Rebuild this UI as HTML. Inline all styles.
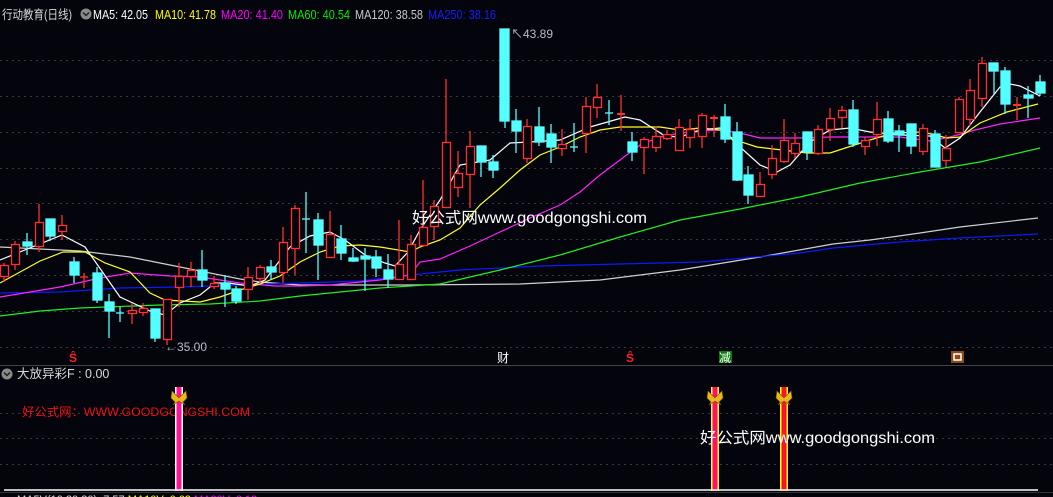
<!DOCTYPE html>
<html><head><meta charset="utf-8"><style>
html,body{margin:0;padding:0;background:#04040d;width:1053px;height:497px;overflow:hidden}
svg{display:block}
text{font-family:"Liberation Sans","Noto Sans CJK SC",sans-serif}
</style></head><body>
<svg width="1053" height="497" viewBox="0 0 1053 497" xmlns="http://www.w3.org/2000/svg">
<rect width="1053" height="497" fill="#04040d"/>
<g stroke="#3a3a3a" stroke-dasharray="2,4" stroke-width="1">
<line x1="0" y1="60.5" x2="1053" y2="60.5"/><line x1="0" y1="96.5" x2="1053" y2="96.5"/>
<line x1="0" y1="132.5" x2="1053" y2="132.5"/><line x1="0" y1="168.5" x2="1053" y2="168.5"/>
<line x1="0" y1="203.5" x2="1053" y2="203.5"/><line x1="0" y1="239.5" x2="1053" y2="239.5"/>
<line x1="0" y1="275.5" x2="1053" y2="275.5"/><line x1="0" y1="311.5" x2="1053" y2="311.5"/>
<line x1="0" y1="347.5" x2="1053" y2="347.5"/>
<line x1="0" y1="413.5" x2="1053" y2="413.5"/><line x1="0" y1="438.5" x2="1053" y2="438.5"/><line x1="0" y1="464.5" x2="1053" y2="464.5"/>
</g>
<line x1="0" y1="365.5" x2="1053" y2="365.5" stroke="#444" stroke-width="1"/>
<line x1="0" y1="492.5" x2="1053" y2="492.5" stroke="#333" stroke-width="1"/>

<g fill="none" stroke-width="1.2">
<polyline stroke="#d0d0d0" points="0,247 40,249 80,251 130,257 200,271 240,279 260,282 300,285 410,285 520,284 600,280 680,270 760,257 833,244 870,240 920,233 960,227 1038,218"/>
<polyline stroke="#0a1aff" points="0,293 60,292 120,288 180,287 240,285 300,283 360,281 410,275 460,270 540,266 620,264 700,262 800,253 833,248 900,242 960,238 1038,234"/>
<polyline stroke="#22ee22" points="0,316 40,311 80,308 160,305 210,304 260,301 300,296 340,292 380,288 410,286 440,284 500,270 560,255 620,237 680,220 740,209 800,197 860,183 920,172 980,162 1040,148"/>
<polyline stroke="#ff22ff" points="0,297 60,287 100,278 130,273 170,276 200,277 240,283 275,286 300,286 330,285 380,280 410,275 420,262 440,259 470,246 500,232 530,218 560,205 580,192 600,175 620,160 640,145 660,137 680,133 700,131 720,130 740,133 760,138 800,138 830,137 900,137 930,141 950,137 975,130 1000,124 1020,121 1040,118"/>
<polyline stroke="#ffff22" points="0,283 40,261 63,252 85,252 105,263 130,272 150,293 165,300 200,302 220,297 240,290 260,284 280,276 300,262 320,252 340,246 360,245 380,247 410,252 420,247 440,240 460,228 480,205 500,188 520,170 540,155 560,147 580,137 600,130 620,127 660,127 680,130 700,128 720,130 735,140 757,147 807,153 830,153 870,140 893,133 923,132 947,138 960,137 980,123 1007,112 1038,104"/>
<polyline stroke="#ffffff" points="0,260 62,235 85,247 120,297 150,311 165,315 180,303 200,295 215,283 228,283 250,286 265,280 290,247 310,236 330,232 345,240 365,255 385,263 395,266 408,252 420,230 440,200 460,165 490,160 510,143 530,142 560,140 590,127 625,117 640,120 665,136 680,137 700,130 720,128 740,147 760,165 777,172 790,165 810,142 830,130 850,128 870,132 900,135 930,136 945,148 960,138 980,112 1000,87 1010,84 1020,86 1040,96"/>
</g>

<g stroke="#ff3030" stroke-width="1.3" fill="#04040d">
<line x1="4" y1="263" x2="4" y2="282"/><rect x="0.5" y="265.5" width="8" height="11"/>
<line x1="15" y1="241" x2="15" y2="270"/><rect x="11.5" y="244.5" width="8" height="20"/>
<line x1="39" y1="204" x2="39" y2="252"/><rect x="35.5" y="222.5" width="8" height="24"/>
<line x1="62" y1="215" x2="62" y2="240"/><rect x="58.5" y="225.5" width="8" height="6"/>
<line x1="84" y1="273" x2="84" y2="288"/><line x1="80" y1="277" x2="88" y2="277"/>
<line x1="132" y1="303" x2="132" y2="324"/><rect x="128.5" y="310.5" width="8" height="3"/>
<line x1="143" y1="303" x2="143" y2="316"/><rect x="139.5" y="308.5" width="8" height="4"/>
<line x1="167" y1="299" x2="167" y2="345"/><rect x="163.5" y="299.5" width="8" height="40"/>
<line x1="179" y1="263" x2="179" y2="307"/><rect x="175.5" y="276.5" width="8" height="11"/>
<line x1="191" y1="262" x2="191" y2="287"/><rect x="187.5" y="270.5" width="8" height="6"/>
<line x1="214" y1="276" x2="214" y2="289"/><rect x="210.5" y="283.5" width="8" height="3"/>
<line x1="248" y1="267" x2="248" y2="300"/><rect x="244.5" y="277.5" width="8" height="12"/>
<line x1="260" y1="265" x2="260" y2="283"/><rect x="256.5" y="267.5" width="8" height="11"/>
<line x1="283" y1="227" x2="283" y2="283"/><rect x="279.5" y="242.5" width="8" height="30"/>
<line x1="295" y1="205" x2="295" y2="275"/><rect x="291.5" y="208.5" width="8" height="40"/>
<line x1="330" y1="211" x2="330" y2="257"/><rect x="326.5" y="234.5" width="8" height="23"/>
<line x1="399" y1="220" x2="399" y2="280"/><rect x="395.5" y="264.5" width="8" height="15"/>
<line x1="411" y1="235" x2="411" y2="280"/><rect x="407.5" y="244.5" width="8" height="35"/>
<line x1="423" y1="180" x2="423" y2="247"/><rect x="419.5" y="227.5" width="8" height="18"/>
<line x1="434" y1="200" x2="434" y2="240"/><rect x="430.5" y="206.5" width="8" height="20"/>
<line x1="446" y1="79" x2="446" y2="207"/><rect x="442.5" y="142.5" width="8" height="65"/>
<line x1="458" y1="151" x2="458" y2="197"/><rect x="454.5" y="173.5" width="8" height="14"/>
<line x1="470" y1="131" x2="470" y2="208"/><rect x="466.5" y="146.5" width="8" height="28"/>
<line x1="527" y1="119" x2="527" y2="163"/><rect x="523.5" y="126.5" width="8" height="32"/>
<line x1="562" y1="129" x2="562" y2="156"/><rect x="558.5" y="144.5" width="8" height="4"/>
<line x1="586" y1="97" x2="586" y2="153"/><rect x="582.5" y="106.5" width="8" height="27"/>
<line x1="597" y1="84" x2="597" y2="118"/><rect x="593.5" y="97.5" width="8" height="10"/>
<line x1="621" y1="95" x2="621" y2="131"/><line x1="617" y1="114" x2="625" y2="114" stroke-width="2"/>
<line x1="644" y1="137" x2="644" y2="174"/><rect x="640.5" y="139.5" width="8" height="8"/>
<line x1="656" y1="126" x2="656" y2="152"/><rect x="652.5" y="136.5" width="8" height="11"/>
<line x1="667" y1="130" x2="667" y2="140"/><rect x="663.5" y="134.5" width="8" height="4"/>
<line x1="679" y1="119" x2="679" y2="151"/><rect x="675.5" y="127.5" width="8" height="23"/>
<line x1="690" y1="119" x2="690" y2="148"/><rect x="686.5" y="129.5" width="8" height="8"/>
<line x1="702" y1="113" x2="702" y2="148"/><rect x="698.5" y="115.5" width="8" height="21"/>
<line x1="714" y1="115" x2="714" y2="137"/><line x1="710" y1="118" x2="718" y2="118" stroke-width="2"/>
<line x1="760" y1="172" x2="760" y2="196"/><rect x="756.5" y="184.5" width="8" height="12"/>
<line x1="772" y1="145" x2="772" y2="179"/><rect x="768.5" y="158.5" width="8" height="16"/>
<line x1="784" y1="119" x2="784" y2="163"/><rect x="780.5" y="140.5" width="8" height="21"/>
<line x1="795" y1="133" x2="795" y2="158"/><rect x="791.5" y="143.5" width="8" height="10"/>
<line x1="818" y1="125" x2="818" y2="155"/><rect x="814.5" y="129.5" width="8" height="24"/>
<line x1="830" y1="108" x2="830" y2="141"/><rect x="826.5" y="118.5" width="8" height="11"/>
<line x1="842" y1="106" x2="842" y2="128"/><rect x="838.5" y="110.5" width="8" height="7"/>
<line x1="865" y1="137" x2="865" y2="155"/><rect x="861.5" y="140.5" width="8" height="6"/>
<line x1="877" y1="102" x2="877" y2="146"/><rect x="873.5" y="119.5" width="8" height="15"/>
<line x1="923" y1="124" x2="923" y2="155"/><rect x="919.5" y="128.5" width="8" height="23"/>
<line x1="946" y1="135" x2="946" y2="167"/><rect x="942.5" y="148.5" width="8" height="12"/>
<line x1="959" y1="97" x2="959" y2="133"/><rect x="955.5" y="99.5" width="8" height="33"/>
<line x1="970" y1="79" x2="970" y2="126"/><rect x="966.5" y="90.5" width="8" height="29"/>
<line x1="982" y1="57" x2="982" y2="107"/><rect x="978.5" y="63.5" width="8" height="35"/>
<line x1="1017" y1="97" x2="1017" y2="120"/><line x1="1013" y1="105" x2="1021" y2="105" stroke-width="2"/>
</g>
<g stroke="#55ffff" stroke-width="1.3" fill="#55ffff">
<line x1="27" y1="233" x2="27" y2="255"/><rect x="23" y="242" width="9" height="4"/>
<line x1="50" y1="219" x2="50" y2="241"/><rect x="46" y="219" width="9" height="17"/>
<line x1="74" y1="257" x2="74" y2="283"/><rect x="70" y="262" width="9" height="13"/>
<line x1="97" y1="267" x2="97" y2="303"/><rect x="93" y="273" width="9" height="27"/>
<line x1="109" y1="294" x2="109" y2="338"/><rect x="105" y="302" width="9" height="9"/>
<line x1="120" y1="307" x2="120" y2="322"/><line x1="116" y1="313" x2="124" y2="313"/>
<line x1="155" y1="309" x2="155" y2="342"/><rect x="151" y="309" width="9" height="29"/>
<line x1="202" y1="250" x2="202" y2="287"/><rect x="198" y="270" width="9" height="10"/>
<line x1="225" y1="275" x2="225" y2="307"/><rect x="221" y="283" width="9" height="6"/>
<line x1="236" y1="286" x2="236" y2="304"/><rect x="232" y="289" width="9" height="12"/>
<line x1="271" y1="260" x2="271" y2="280"/><rect x="267" y="267" width="9" height="5"/>
<line x1="306" y1="192" x2="306" y2="253"/><line x1="302" y1="219" x2="310" y2="219"/>
<line x1="318" y1="213" x2="318" y2="280"/><rect x="314" y="220" width="9" height="25"/>
<line x1="341" y1="225" x2="341" y2="260"/><rect x="337" y="239" width="9" height="14"/>
<line x1="353" y1="248" x2="353" y2="262"/><rect x="349" y="258" width="9" height="3"/>
<line x1="365" y1="248" x2="365" y2="291"/><rect x="361" y="256" width="9" height="3"/>
<line x1="376" y1="250" x2="376" y2="277"/><rect x="372" y="257" width="9" height="11"/>
<line x1="388" y1="254" x2="388" y2="288"/><rect x="384" y="270" width="9" height="9"/>
<line x1="481" y1="146" x2="481" y2="177"/><rect x="477" y="146" width="9" height="16"/>
<line x1="493" y1="155" x2="493" y2="178"/><rect x="489" y="162" width="9" height="8"/>
<line x1="505" y1="29" x2="505" y2="128"/><rect x="500" y="29" width="9" height="92"/>
<line x1="516" y1="109" x2="516" y2="153"/><rect x="512" y="121" width="9" height="10"/>
<line x1="539" y1="107" x2="539" y2="146"/><rect x="535" y="127" width="9" height="15"/>
<line x1="551" y1="124" x2="551" y2="163"/><rect x="547" y="134" width="9" height="13"/>
<line x1="574" y1="123" x2="574" y2="152"/><line x1="570" y1="147" x2="578" y2="147"/>
<line x1="609" y1="100" x2="609" y2="125"/><line x1="605" y1="113" x2="613" y2="113"/>
<line x1="632" y1="132" x2="632" y2="161"/><rect x="628" y="142" width="9" height="10"/>
<line x1="725" y1="104" x2="725" y2="143"/><rect x="721" y="117" width="9" height="22"/>
<line x1="737" y1="122" x2="737" y2="181"/><rect x="733" y="132" width="9" height="48"/>
<line x1="748" y1="166" x2="748" y2="204"/><rect x="744" y="175" width="9" height="20"/>
<line x1="807" y1="132" x2="807" y2="160"/><rect x="803" y="132" width="9" height="20"/>
<line x1="853" y1="100" x2="853" y2="147"/><rect x="849" y="110" width="9" height="34"/>
<line x1="888" y1="111" x2="888" y2="143"/><rect x="884" y="119" width="9" height="22"/>
<line x1="899" y1="125" x2="899" y2="152"/><rect x="895" y="131" width="9" height="4"/>
<line x1="911" y1="124" x2="911" y2="154"/><rect x="907" y="124" width="9" height="22"/>
<line x1="935" y1="130" x2="935" y2="167"/><rect x="931" y="134" width="9" height="33"/>
<line x1="994" y1="63" x2="994" y2="94"/><rect x="989" y="63" width="9" height="8"/>
<line x1="1005" y1="67" x2="1005" y2="114"/><rect x="1001" y="71" width="9" height="33"/>
<line x1="1028" y1="86" x2="1028" y2="118"/><rect x="1024" y="95" width="9" height="3"/>
<line x1="1040" y1="75" x2="1040" y2="96"/><rect x="1036" y="82" width="9" height="11"/>
</g>

<text x="2" y="19" font-size="12.5" fill="#d8d8d8" textLength="70" lengthAdjust="spacingAndGlyphs">行动教育(日线)</text>
<circle cx="86" cy="14" r="5.5" fill="#8a8a8a"/><path d="M83 12.5 L86 15.5 L89 12.5" stroke="#222" stroke-width="1.5" fill="none"/>
<g font-size="12.5">
<text x="93" y="19" fill="#ffffff" textLength="55" lengthAdjust="spacingAndGlyphs">MA5: 42.05</text>
<text x="155" y="19" fill="#ffff00" textLength="61" lengthAdjust="spacingAndGlyphs">MA10: 41.78</text>
<text x="221" y="19" fill="#ff00ff" textLength="62" lengthAdjust="spacingAndGlyphs">MA20: 41.40</text>
<text x="288" y="19" fill="#00ee00" textLength="62" lengthAdjust="spacingAndGlyphs">MA60: 40.54</text>
<text x="355" y="19" fill="#c8c8c8" textLength="68" lengthAdjust="spacingAndGlyphs">MA120: 38.58</text>
<text x="428" y="19" fill="#1a1aff" textLength="68" lengthAdjust="spacingAndGlyphs">MA250: 38.16</text>
</g>

<text x="511" y="38" font-size="12" fill="#b8b8c8">↖43.89</text>
<text x="165" y="351" font-size="12" fill="#b8b8c8">←35.00</text>
<text x="412" y="223" font-size="15.5" fill="#ffffff" textLength="235" lengthAdjust="spacingAndGlyphs">好公式网www.goodgongshi.com</text>

<text x="69" y="362" font-size="12" font-weight="bold" fill="#ff2020">Ŝ</text>
<text x="497" y="362" font-size="12" fill="#ffffff">财</text>
<text x="626" y="362" font-size="12" font-weight="bold" fill="#ff2020">Ŝ</text>
<rect x="719" y="351" width="13" height="12" fill="#0a7a0a"/><text x="719" y="362" font-size="12" fill="#ffffff">减</text>
<rect x="951" y="351" width="13" height="12" fill="#8a4a10"/><rect x="954" y="354" width="7" height="6" fill="none" stroke="#fff" stroke-width="1.5"/>

<circle cx="7" cy="374" r="5.5" fill="#8a8a8a"/><path d="M4 372.5 L7 375.5 L10 372.5" stroke="#222" stroke-width="1.5" fill="none"/>
<text x="17" y="378" font-size="12.5" fill="#d8d8d8">大放异彩F : 0.00</text>
<text x="22" y="416" font-size="12" fill="#ee1010" textLength="228" lengthAdjust="spacingAndGlyphs">好公式网：WWW.GOODGONGSHI.COM</text>

<g>
<rect x="175" y="387" width="8" height="104" fill="#ffffff"/><rect x="176.5" y="387" width="5" height="104" fill="#ff1493"/>
<rect x="711" y="387" width="8" height="104" fill="#ffff00"/><rect x="712.5" y="387" width="5" height="104" fill="#ff1070"/>
<rect x="780" y="387" width="8" height="104" fill="#ffff00"/><rect x="781.5" y="387" width="5" height="104" fill="#ff1030"/>
</g>
<g fill="#e8b818" stroke="#7a5a00" stroke-width="0.6">
<path d="M179 398 L172 391 L171 398 L175 402 L173 405 L179 401 L185 405 L183 402 L187 398 L186 391 Z"/>
<path d="M715 398 L708 391 L707 398 L711 402 L709 405 L715 401 L721 405 L719 402 L723 398 L722 391 Z"/>
<path d="M784 398 L777 391 L776 398 L780 402 L778 405 L784 401 L790 405 L788 402 L792 398 L791 391 Z"/>
</g>
<text x="700" y="443" font-size="15.5" fill="#ffffff" textLength="235" lengthAdjust="spacingAndGlyphs">好公式网www.goodgongshi.com</text>
<line x1="4" y1="490" x2="1038" y2="490" stroke="#ffffff" stroke-width="1.5"/>
<text y="503" font-size="11"><tspan x="17" fill="#d8d8d8">MA5V(10,20,30): 7.57 </tspan><tspan fill="#ffff00">MA10V: 6.62 </tspan><tspan fill="#ff00ff">MA20V: 6.12</tspan></text>
</svg>
</body></html>
